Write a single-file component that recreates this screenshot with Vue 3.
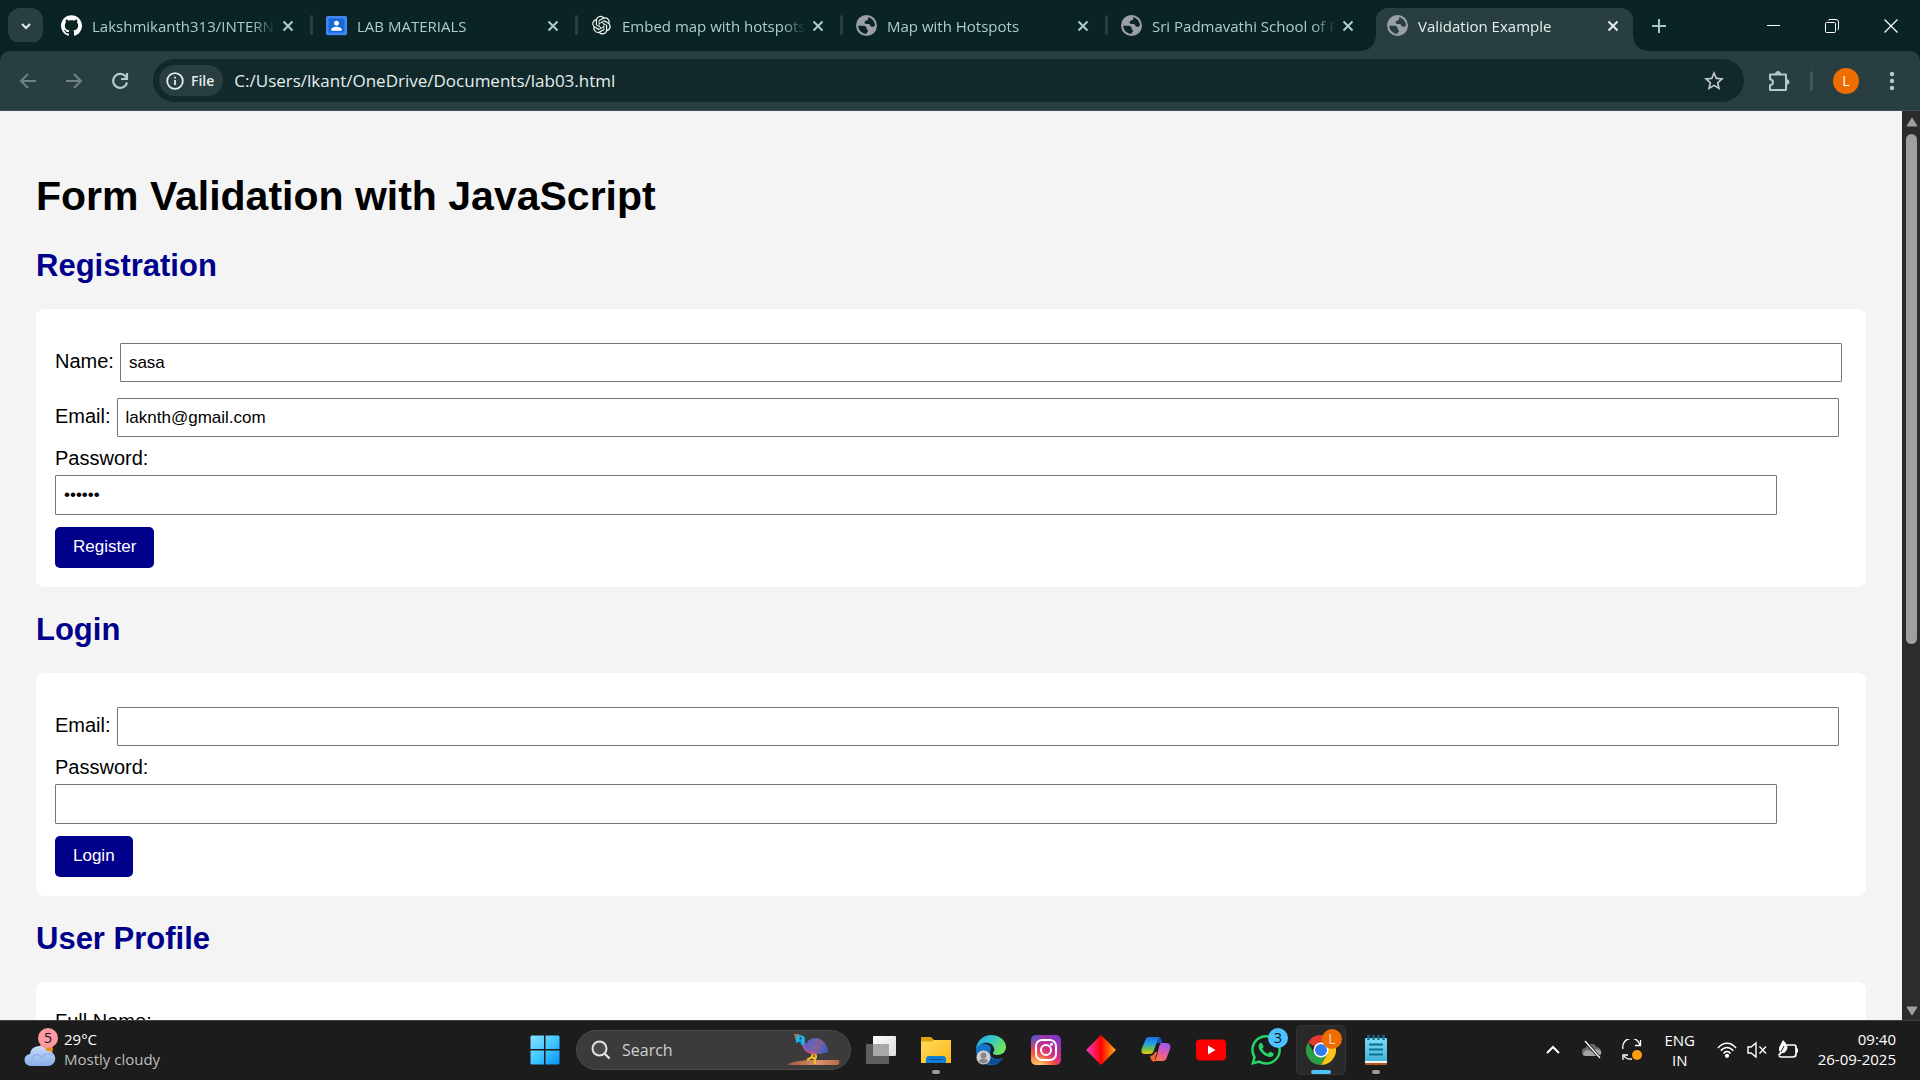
<script setup>
import { ref } from 'vue'

const tabs = [
  { title: 'Lakshmikanth313/INTERN', icon: 'github' },
  { title: 'LAB MATERIALS', icon: 'classroom' },
  { title: 'Embed map with hotspots', icon: 'openai' },
  { title: 'Map with Hotspots', icon: 'globe' },
  { title: 'Sri Padmavathi School of P', icon: 'globe' },
  { title: 'Validation Example', icon: 'globe', active: true },
]

const url = ref('C:/Users/lkant/OneDrive/Documents/lab03.html')
const regName = ref('sasa')
const regEmail = ref('laknth@gmail.com')
const regPassword = ref('secret')
const loginEmail = ref('')
const loginPassword = ref('')
const fullName = ref('')
</script>

<template>
  <div class="screen">
    <header class="tabstrip">
      <button class="tab-search" aria-label="Search tabs">
        <svg width="12" height="12" viewBox="0 0 12 12"><path d="M2 4l4 4 4-4" fill="none" stroke="#dfe9e9" stroke-width="2" /></svg>
      </button>
      <div class="tabs" role="tablist">
        <div v-for="tab in tabs" :key="tab.title" class="tab" :class="{ active: tab.active }" role="tab" :aria-selected="!!tab.active">
          <svg v-if="tab.icon === 'github'" class="favicon" viewBox="0 0 24 24">
            <path fill="#fff" d="M12 .297c-6.63 0-12 5.373-12 12 0 5.303 3.438 9.8 8.205 11.385.6.113.82-.258.82-.577 0-.285-.01-1.04-.015-2.04-3.338.724-4.042-1.61-4.042-1.61C4.422 18.07 3.633 17.7 3.633 17.7c-1.087-.744.084-.729.084-.729 1.205.084 1.838 1.236 1.838 1.236 1.07 1.835 2.809 1.305 3.495.998.108-.776.417-1.305.76-1.605-2.665-.3-5.466-1.332-5.466-5.93 0-1.31.465-2.38 1.235-3.22-.135-.303-.54-1.523.105-3.176 0 0 1.005-.322 3.3 1.23.96-.267 1.98-.399 3-.405 1.02.006 2.04.138 3 .405 2.28-1.552 3.285-1.23 3.285-1.23.645 1.653.24 2.873.12 3.176.765.84 1.23 1.91 1.23 3.22 0 4.61-2.805 5.625-5.475 5.92.42.36.81 1.096.81 2.22 0 1.606-.015 2.896-.015 3.286 0 .315.21.69.825.57C20.565 22.092 24 17.592 24 12.297c0-6.627-5.373-12-12-12" />
          </svg>
          <svg v-else-if="tab.icon === 'classroom'" class="favicon" viewBox="0 0 24 24">
            <rect x="0" y="1" width="24" height="22" rx="2" fill="#4285f4" />
            <rect x="3" y="4" width="18" height="16" fill="#1967d2" />
            <circle cx="12" cy="9.5" r="2.8" fill="#fff" />
            <path d="M6 18v-1.5c0-2 3.500-3.200 6-3.200s6 1.200 6 3.200V18z" fill="#fff" />
          </svg>
          <svg v-else-if="tab.icon === 'openai'" class="favicon" viewBox="-1.500 -1 27 27">
            <path fill="#f1f5f5" d="M22.2819 9.8211a5.9847 5.9847 0 0 0-.5157-4.9108 6.0462 6.0462 0 0 0-6.5098-2.9A6.0651 6.0651 0 0 0 4.9807 4.1818a5.9847 5.9847 0 0 0-3.9977 2.9 6.0462 6.0462 0 0 0 .7427 7.0966 5.98 5.98 0 0 0 .511 4.9107 6.051 6.051 0 0 0 6.5146 2.9001A5.9847 5.9847 0 0 0 13.2599 24a6.0557 6.0557 0 0 0 5.7718-4.2058 5.9894 5.9894 0 0 0 3.9977-2.9001 6.0557 6.0557 0 0 0-.7475-7.0729zm-9.022 12.6081a4.4755 4.4755 0 0 1-2.8764-1.0408l.1419-.0804 4.7783-2.7582a.7948.7948 0 0 0 .3927-.6813v-6.7369l2.02 1.1686a.071.071 0 0 1 .038.052v5.5826a4.504 4.504 0 0 1-4.4945 4.4944zm-9.6607-4.1254a4.4708 4.4708 0 0 1-.5346-3.0137l.142.0852 4.783 2.7582a.7712.7712 0 0 0 .7806 0l5.8428-3.3685v2.3324a.0804.0804 0 0 1-.0332.0615L9.74 19.9502a4.4992 4.4992 0 0 1-6.1408-1.6464zM2.3408 7.8956a4.485 4.485 0 0 1 2.3655-1.9728V11.6a.7664.7664 0 0 0 .3879.6765l5.8144 3.3543-2.0201 1.1685a.0757.0757 0 0 1-.071 0l-4.8303-2.7865A4.504 4.504 0 0 1 2.3408 7.872zm16.5963 3.8558L13.1038 8.364 15.1192 7.2a.0757.0757 0 0 1 .071 0l4.8303 2.7913a4.4944 4.4944 0 0 1-.6765 8.1042v-5.6772a.79.79 0 0 0-.407-.667zm2.0107-3.0231l-.142-.0852-4.7735-2.7818a.7759.7759 0 0 0-.7854 0L9.409 9.2297V6.8974a.0662.0662 0 0 1 .0284-.0615l4.8303-2.7866a4.4992 4.4992 0 0 1 6.6802 4.66zM8.3065 12.863l-2.02-1.1638a.0804.0804 0 0 1-.038-.0567V6.0742a4.4992 4.4992 0 0 1 7.3757-3.4537l-.142.0805L8.704 5.459a.7948.7948 0 0 0-.3927.6813zm1.0976-2.3654l2.602-1.4998 2.6069 1.4998v2.9994l-2.5974 1.4997-2.6067-1.4997Z" />
          </svg>
          <svg v-else class="favicon" viewBox="2 2 20 20">
            <circle cx="12" cy="12" r="10" fill="#9aa0a6" />
            <path class="sea" d="M13 4c1.500 1.500.5 3-1.500 3.500-1.800.5-1.800 2.800.3 3H14c1.800.2 1.500 2.700 3.500 2.700 1.200 0 2-.5 2.500-1.200A8 8 0 0 0 13 4z" />
            <path class="sea" d="M4 12.300h4.500c2.500 0 3.700 1 3.700 2.700 0 1.200 1.300 1 1.300 2.300 0 1-1.500.8-1.500 2.700A8 8 0 0 1 4 12.300z" />
          </svg>
          <span class="tab-title">{{ tab.title }}</span>
          <button class="tab-close" :aria-label="'Close ' + tab.title">
            <svg width="12" height="12" viewBox="0 0 12 12"><path d="M1.500 1.500l9 9m0-9l-9 9" stroke="currentColor" stroke-width="2" /></svg>
          </button>
        </div>
      </div>
      <button class="new-tab" aria-label="New tab">
        <svg width="14" height="14" viewBox="0 0 14 14"><path d="M7 0v14M0 7h14" stroke="#a9c7c7" stroke-width="2" /></svg>
      </button>
      <div class="window-controls">
        <button aria-label="Minimize"><svg width="14" height="14" viewBox="0 0 14 14"><path d="M1 6.500h13" stroke="#fff" /></svg></button>
        <button aria-label="Restore">
          <svg width="14" height="14" viewBox="0 0 14 14" fill="none" stroke="#fff"><rect x=".5" y="3.500" width="10" height="10" rx="1" /><path d="M3 1.500q.5-1 2-1h6q2.500 0 2.500 2.500v6q0 1.500-1 2" /></svg>
        </button>
        <button aria-label="Close"><svg width="14" height="14" viewBox="0 0 14 14"><path d="M.5.5l13 13m0-13l-13 13" stroke="#fff" stroke-width="1.200" /></svg></button>
      </div>
    </header>

    <nav class="toolbar">
      <div class="nav-buttons">
        <button aria-label="Back"><svg width="18" height="18" viewBox="0 0 18 18"><path d="M17 9H2.500M9 2L2 9l7 7" fill="none" stroke="#6f8385" stroke-width="2" /></svg></button>
        <button aria-label="Forward"><svg width="18" height="18" viewBox="0 0 18 18"><path d="M1 9h14.500M9 2l7 7-7 7" fill="none" stroke="#6f8385" stroke-width="2" /></svg></button>
        <button aria-label="Reload"><svg width="18" height="18" viewBox="0 0 18 18"><path d="M15.300 5.500A7 7 0 1 0 16 10.500M16 1v6h-6" fill="none" stroke="#b0cccc" stroke-width="2.200" /></svg></button>
      </div>
      <div class="omnibox">
        <button class="chip">
          <svg width="18" height="18" viewBox="0 0 18 18"><circle cx="9" cy="9" r="7.800" fill="none" stroke="#e3ebeb" stroke-width="1.800" /><path d="M9 8v5M9 4.700v1.900" stroke="#e3ebeb" stroke-width="1.800" /></svg>
          File
        </button>
        <input v-model="url" class="url" type="text" aria-label="Address" />
        <button class="star" aria-label="Bookmark this page">
          <svg width="22" height="22" viewBox="1 1 22 22"><path d="M22 9.240l-7.190-.62L12 2 9.190 8.630 2 9.240l5.460 4.730L5.820 21 12 17.270 18.180 21l-1.630-7.030zM12 15.400l-3.760 2.270 1-4.280-3.320-2.880 4.380-.38L12 6.100l1.710 4.040 4.380.38-3.320 2.880 1 4.280z" fill="#c5cccd" /></svg>
        </button>
      </div>
      <div class="toolbar-end">
        <button aria-label="Extensions">
          <svg width="22" height="22" viewBox="0 0 22 22"><path d="M2 4.500h16v15.500H2v-4.700c4-.7 4-5.300 0-6z" fill="none" stroke="#b0cccc" stroke-width="2" stroke-linejoin="round" /><path d="M7.500 4a2.500 2.500 0 0 1 5 0zM18.500 9.500a2.500 2.500 0 0 1 0 5z" fill="#b0cccc" stroke="#b0cccc" /></svg>
        </button>
        <span class="divider"></span>
        <button class="avatar" aria-label="Profile">L</button>
        <button aria-label="Menu"><svg width="6" height="20" viewBox="0 0 6 20" fill="#b0cccc"><circle cx="3" cy="3" r="2.200" /><circle cx="3" cy="10" r="2.200" /><circle cx="3" cy="17" r="2.200" /></svg></button>
      </div>
    </nav>

    <div class="viewport">
      <main class="page">
        <h1>Form Validation with JavaScript</h1>

        <h2>Registration</h2>
        <form class="card" @submit.prevent>
          <div class="field"><label for="reg-name">Name:</label><input id="reg-name" v-model="regName" type="text" /></div>
          <div class="field"><label for="reg-email">Email:</label><input id="reg-email" v-model="regEmail" type="email" /></div>
          <div class="field stacked"><label for="reg-password">Password:</label><input id="reg-password" v-model="regPassword" type="password" /></div>
          <button type="submit">Register</button>
        </form>

        <h2>Login</h2>
        <form class="card" @submit.prevent>
          <div class="field"><label for="login-email">Email:</label><input id="login-email" v-model="loginEmail" type="email" /></div>
          <div class="field stacked"><label for="login-password">Password:</label><input id="login-password" v-model="loginPassword" type="password" /></div>
          <button type="submit">Login</button>
        </form>

        <h2>User Profile</h2>
        <form class="card" @submit.prevent>
          <div class="field stacked"><label for="full-name">Full Name:</label><input id="full-name" v-model="fullName" type="text" /></div>
        </form>
      </main>
      <div class="scrollbar" aria-hidden="true">
        <svg width="12" height="10" viewBox="0 0 12 10"><path d="M6 1l5 8H1z" fill="#9f9f9f" stroke="#9f9f9f" stroke-linejoin="round" /></svg>
        <div class="track"><div class="thumb"></div></div>
        <svg width="12" height="10" viewBox="0 0 12 10"><path d="M6 9l5-8H1z" fill="#9f9f9f" stroke="#9f9f9f" stroke-linejoin="round" /></svg>
      </div>
    </div>

    <footer class="taskbar">
      <button class="weather">
        <span class="weather-icon">
          <svg width="32" height="38" viewBox="0 0 32 38">
            <defs><linearGradient id="cloud" x2="0" y2="1"><stop stop-color="#c9dcfa" /><stop offset="1" stop-color="#88aeea" /></linearGradient></defs>
            <circle cx="22" cy="19" r="7" fill="#f28a1c" />
            <path d="M7 36a6 6 0 0 1-1-12 9 9 0 0 1 17-3 7.500 7.500 0 0 1 1.500 15z" fill="url(#cloud)" />
            <path d="M8 27c4-4 8-3 10 1 2-5 8-6 11-2" fill="none" stroke="#7fa3e4" stroke-width="1.500" opacity=".6" />
          </svg>
          <span class="count pink">5</span>
        </span>
        <span class="weather-text"><span>29°C</span><span class="dim">Mostly cloudy</span></span>
      </button>

      <div class="apps">
        <button class="start" aria-label="Start">
          <svg width="30" height="30" viewBox="0 0 30 30">
            <defs><linearGradient id="win" x2="1" y2="1"><stop stop-color="#86e0ff" /><stop offset=".5" stop-color="#41c8ff" /><stop offset="1" stop-color="#0892fb" /></linearGradient></defs>
            <path d="M1.500.5H14V14H.5V1.500zM15.500.5h13l1 1V14h-14zM.5 15.500H14v14H1.500l-1-1zM15.500 15.500h14v13l-1 1h-13z" fill="url(#win)" />
          </svg>
        </button>
        <label class="search">
          <svg width="20" height="20" viewBox="0 0 20 20"><circle cx="8.500" cy="8.500" r="7" fill="#ffffff14" stroke="#e2e2e2" stroke-width="2" /><path d="M13.500 13.500l5 5" stroke="#e2e2e2" stroke-width="2.400" /></svg>
          <input type="text" placeholder="Search" aria-label="Search" />
          <svg width="52" height="32" viewBox="0 0 52 32">
            <defs>
              <linearGradient id="bird" x2="1" y2=".3"><stop stop-color="#c84f9a" /><stop offset=".35" stop-color="#5a62c8" /><stop offset=".7" stop-color="#8a6090" /><stop offset="1" stop-color="#4a5cc4" /></linearGradient>
              <linearGradient id="sand" x2="1"><stop stop-color="#a85a3c" /><stop offset=".6" stop-color="#d98f6e" /><stop offset="1" stop-color="#b96a48" /></linearGradient>
            </defs>
            <path d="M0 30c7-3 16-4 26-4h24c2 0 2 5-1 5H4c-2 0-4 0-4-1z" fill="url(#sand)" />
            <path d="M25 18l-1 5-5 3m5-3l3 2v5m0-12l1 5-2 4" fill="none" stroke="#f4bd22" stroke-width="2.200" />
            <path d="M14 9c0 4 3 8 8 10 6 2 13 1 18-1 0-7-5-13-12-14-6 0-8 3-10 6l-1-2z" fill="url(#bird)" />
            <path d="M15 12c2 5 7 8 13 7" fill="none" stroke="#d24b8f" stroke-width="1.500" />
            <path d="M6 0l5 0 1 3-4 4z" fill="#9a7f64" />
            <path d="M8 5c0-5 9-5 9 0 0 3-1 4-1 6-3 1-4-2-3-4l-5 2z" fill="#19b5e8" />
            <circle cx="12.500" cy="4.500" r="1" fill="#123" />
          </svg>
        </label>
        <button aria-label="Task view">
          <svg width="30" height="28" viewBox="0 0 30 28">
            <defs><linearGradient id="tv" x2="1" y2="1"><stop stop-color="#fff" /><stop offset="1" stop-color="#dadada" /></linearGradient></defs>
            <rect x="0" y="8" width="23" height="20" rx="1" fill="#5f5f5f" /><rect x="7" y="0" width="23" height="20" rx="1" fill="url(#tv)" /><path d="M7 8h16v12H7z" fill="#a9a9a9" />
          </svg>
        </button>
        <button class="running" aria-label="File Explorer">
          <svg width="30" height="28" viewBox="0 0 30 28">
            <defs><linearGradient id="folder" x2="1" y2="1"><stop stop-color="#ffd95e" /><stop offset="1" stop-color="#fdb813" /></linearGradient></defs>
            <path d="M0 1h10l3 3v8H0z" fill="#e0a008" /><path d="M0 5.500h11l2-1.500h17v23H0z" fill="url(#folder)" /><path d="M5 27v-4q0-3 3-3h14q3 0 3 3v4z" fill="#0e7dd4" /><path d="M8.500 23.500h13" stroke="#064f94" />
          </svg>
        </button>
        <button aria-label="Microsoft Edge">
          <svg width="30" height="30" viewBox="0 0 30 30">
            <defs><linearGradient id="edge" x2="1" y2=".4"><stop stop-color="#2ca8e8" /><stop offset=".5" stop-color="#2fc6d0" /><stop offset="1" stop-color="#6fe25c" /></linearGradient></defs>
            <path d="M1 11C1 18 6 28 16 30c5 0 9-3 11-7-5 3-12 1-14-4-1-4 1-6 2-7z" fill="#0f5fae" />
            <path d="M0 15C0 9 6 8 10 9c5 1 6 5 4 8-1 5 6 9 13 6-3 4-7 7-12 7C6 30 0 23 0 15z" fill="#1674c8" />
            <path d="M13 19c2 6 9 7 14 4-3 5-9 7-14 6-5-2-5-9 0-10z" fill="#0c4d92" />
            <path d="M0 14C1 5 8 0 15 0c9 0 15 6 15 12 0 5-4 8-9 8-3 0-4-1-4-2s2-2 1-5C16 6 4 6 0 14z" fill="url(#edge)" />
            <circle cx="7.500" cy="22.500" r="7" fill="#d3d1cf" /><circle cx="7.500" cy="20.500" r="3" fill="#8a8886" /><path d="M3 26.500c0-4 9-4 9 0-2 2.500-7 2.500-9 0z" fill="#8a8886" />
          </svg>
        </button>
        <button aria-label="Instagram">
          <svg width="30" height="30" viewBox="0 0 30 30">
            <defs>
              <linearGradient id="ig" x1="0" y1="1" x2=".7" y2="0"><stop stop-color="#fdb84d" /><stop offset=".3" stop-color="#f9593c" /><stop offset=".6" stop-color="#d22d84" /><stop offset="1" stop-color="#8436c4" /></linearGradient>
              <radialGradient id="ig-blue" cx="0" cy="0" r=".5"><stop stop-color="#3f5fd8" /><stop offset="1" stop-color="#3f5fd8" stop-opacity="0" /></radialGradient>
              <radialGradient id="ig-gold" cx=".3" cy="1.100" r=".5"><stop stop-color="#ffe08a" /><stop offset="1" stop-color="#ffb04a" stop-opacity="0" /></radialGradient>
            </defs>
            <rect width="30" height="30" rx="5" fill="url(#ig)" /><rect width="30" height="30" rx="5" fill="url(#ig-blue)" /><rect width="30" height="30" rx="5" fill="url(#ig-gold)" />
            <rect x="5" y="5" width="20" height="20" rx="6" fill="none" stroke="#fff" stroke-width="2" /><circle cx="15" cy="15" r="5" fill="none" stroke="#fff" stroke-width="2" /><circle cx="20.500" cy="9.300" r="1.500" fill="#fff" />
          </svg>
        </button>
        <button aria-label="Diamond">
          <svg width="30" height="30" viewBox="0 0 30 30">
            <defs><linearGradient id="dia"><stop stop-color="#ee35c8" /><stop offset=".35" stop-color="#ff1744" /><stop offset=".5" stop-color="#ff0000" /><stop offset=".65" stop-color="#ff3a00" /><stop offset="1" stop-color="#ffb21e" /></linearGradient></defs>
            <path d="M15 0l15 15-15 15L0 15z" fill="url(#dia)" />
          </svg>
        </button>
        <button aria-label="Copilot">
          <svg width="30" height="28" viewBox="0 0 30 28">
            <defs>
              <linearGradient id="cp1" x2="0" y2="1"><stop stop-color="#1b6fe0" /><stop offset=".4" stop-color="#22a3e4" /><stop offset=".7" stop-color="#6cc04a" /><stop offset="1" stop-color="#f2c80f" /></linearGradient>
              <linearGradient id="cp2" x1=".3" x2="0" y2="1"><stop stop-color="#a35be8" /><stop offset=".5" stop-color="#e55b9b" /><stop offset="1" stop-color="#ff7b3a" /></linearGradient>
            </defs>
            <path d="M17 1c2 0 3 1 3.500 3l1 3h-6z" fill="#1c4fc0" />
            <path d="M8 1h11c-2 1-2.500 3-3 5l-3 8c-1 3-2 4-5 4H4c-4 0-4-3-3-6L4 5c1-3 2-4 4-4z" fill="url(#cp1)" />
            <path d="M13 26c-3-1-3-3-4-6 3 0 4-2 5-4h2z" fill="#f06a30" />
            <path d="M20 7h5c4 0 5 3 4 6l-3 8c-1 3-2 4-5 4h-9c3-1 3-3 4-6l2-8c.5-2 1-3 2-4z" fill="url(#cp2)" />
          </svg>
        </button>
        <button aria-label="YouTube">
          <svg width="30" height="22" viewBox="0 0 30 22"><rect width="30" height="21" y=".5" rx="4" fill="#f00" /><path d="M12 6.500l7.500 4.500-7.500 4.500z" fill="#fff" /></svg>
        </button>
        <button aria-label="WhatsApp">
          <svg width="30" height="30" viewBox="0 0 24 24"><path fill="#25d366" d="M17.472 14.382c-.297-.149-1.758-.867-2.030-.967-.273-.099-.471-.148-.67.15-.197.297-.767.966-.94 1.164-.173.199-.347.223-.644.075-.297-.15-1.255-.463-2.390-1.475-.883-.788-1.480-1.761-1.653-2.059-.173-.297-.018-.458.13-.606.134-.133.298-.347.446-.52.149-.174.198-.298.298-.497.099-.198.05-.371-.025-.52-.075-.149-.669-1.612-.916-2.207-.242-.579-.487-.5-.669-.51-.173-.008-.371-.01-.57-.01-.198 0-.52.074-.792.372-.272.297-1.040 1.016-1.040 2.479 0 1.462 1.065 2.875 1.213 3.074.149.198 2.096 3.200 5.077 4.487.709.306 1.262.489 1.694.625.712.227 1.360.195 1.871.118.571-.085 1.758-.719 2.006-1.413.248-.694.248-1.289.173-1.413-.074-.124-.272-.198-.57-.347m-5.421 7.403h-.004a9.870 9.870 0 01-5.031-1.378l-.361-.214-3.741.982.998-3.648-.235-.374a9.860 9.860 0 01-1.510-5.260c.001-5.450 4.436-9.884 9.888-9.884 2.640 0 5.122 1.030 6.988 2.898a9.825 9.825 0 012.893 6.994c-.003 5.450-4.437 9.884-9.885 9.884m8.413-18.297A11.815 11.815 0 0012.050 0C5.495 0 .16 5.335.157 11.892c0 2.096.547 4.142 1.588 5.945L.057 24l6.305-1.654a11.882 11.882 0 005.683 1.448h.005c6.554 0 11.890-5.335 11.893-11.893a11.821 11.821 0 00-3.480-8.413z" /></svg>
          <span class="count blue">3</span>
        </button>
        <button class="running current" aria-label="Google Chrome">
          <svg width="30" height="30" viewBox="0 0 30 30">
            <path d="M15 15L2 7.500A15 15 0 0 1 28 7.500H15z" fill="#e33b2e" />
            <path d="M15 15l6.500 3.800L15 30A15 15 0 0 1 2 7.500l6.500 11.300z" fill="#2b9f47" />
            <path d="M15 7.500h13A15 15 0 0 1 15 30l6.500-11.200z" fill="#fcc419" />
            <circle cx="15" cy="15" r="7.500" fill="#fff" /><circle cx="15" cy="15" r="6" fill="#2f7bf0" />
          </svg>
          <span class="count orange">L</span>
        </button>
        <button class="running" aria-label="Notepad">
          <svg width="24" height="30" viewBox="0 0 24 30">
            <defs><linearGradient id="note" x2="0" y2="1"><stop stop-color="#7fdcf2" /><stop offset="1" stop-color="#44b4d8" /></linearGradient></defs>
            <rect x="1" y="24" width="22" height="6" rx="1" fill="#b3561b" /><rect x="1" y="22" width="22" height="6" fill="#f3f3f3" /><rect x="1" y="3" width="22" height="23" rx="1" fill="url(#note)" />
            <path d="M4.500 0v5M9.500 0v5M14.500 0v5M19.500 0v5" stroke="#0d6e93" stroke-width="2.400" /><path d="M5 9.500h14M5 14.500h14M5 19.500h14" stroke="#0d6e93" stroke-width="2" />
          </svg>
        </button>
      </div>

      <div class="tray">
        <button aria-label="Show hidden icons"><svg width="20" height="20" viewBox="0 0 20 20"><path d="M4 13l6-6 6 6" fill="none" stroke="#fff" stroke-width="2" /></svg></button>
        <button aria-label="OneDrive">
          <svg width="20" height="20" viewBox="0 0 20 20"><path d="M4 16a4 4 0 0 1-.5-8 6 6 0 0 1 11-1 4.600 4.600 0 0 1 1 9z" fill="#6b6b6b" /><path d="M1 14c2-5 6-5 9-2 2-3 6-4 9-1 1 3-1 5-3 5H4c-2 0-3-1-3-2z" fill="#a4a4a4" /><path d="M3 1l15 17" stroke="#1c1c1c" stroke-width="3" /><path d="M3 1l15 17" stroke="#fff" stroke-width="1.300" /></svg>
        </button>
        <button aria-label="Windows Update">
          <svg width="22" height="22" viewBox="0 0 22 22"><path d="M2 10a8.500 8.500 0 0 1 17-4M19.500 1v5.500H14M2 21v-5h5M3 17c2 3 5 3.500 8 3" fill="none" stroke="#fff" stroke-width="1.300" /><circle cx="16" cy="16" r="5" fill="#ff9d0a" /></svg>
        </button>
        <button class="lang"><span>ENG</span><span>IN</span></button>
        <div class="status">
          <svg width="20" height="18" viewBox="0 0 20 18" fill="none" stroke="#fff" stroke-width="1.500"><path d="M1 7c5-6.500 13-6.500 18 0M3.800 9.800c3.500-4.500 8.900-4.500 12.400 0M6.500 12.500c2-2.600 5-2.600 7 0" /><circle cx="10" cy="14.800" r="1.400" fill="#fff" /></svg>
          <svg width="20" height="18" viewBox="0 0 20 18" fill="none" stroke="#fff" stroke-width="1.400"><path d="M1 6v6h3l5 4V2L4 6zM12.500 5.500l6.500 7m0-7l-6.500 7" /></svg>
          <svg width="22" height="20" viewBox="0 0 22 20"><path d="M10 5h7q2 0 2 2v7q0 3-3 3H5q-2 0-3-1" fill="none" stroke="#fff" stroke-width="1.700" /><path d="M19 8.500h2v4h-2z" fill="#fff" /><path d="M6 0c4 4 6 7 3 11-1 2-3 2-4 2l-3 3-1-1 2-3C0 8 4 5 6 0z" fill="#fff" /><path d="M4 12l3-6" stroke="#1c1c1c" /></svg>
        </div>
        <button class="clock"><span>09:40</span><span>26-09-2025</span></button>
      </div>
    </footer>
  </div>
</template>

<style>
body {
  background: #1c1c1c;
}
</style>

<style scoped>
* {
  box-sizing: border-box;
}
.screen {
  display: flex;
  flex-direction: column;
  height: 100vh;
  overflow: hidden;
  font-family: 'Open Sans', 'Noto Sans', sans-serif;
  font-size: 15px;
}
button {
  display: flex;
  align-items: center;
  justify-content: center;
  padding: 0;
  border: 0;
  background: none;
  color: inherit;
  font: inherit;
}
svg {
  display: block;
  flex: none;
}
input {
  min-width: 0;
  outline: 0;
}

/* Tab strip */
.tabstrip {
  display: flex;
  flex: none;
  height: 51px;
  padding-left: 8px;
  background: #0a2325;
  color: #b0cccc;
}
.tab-search {
  width: 35px;
  height: 35px;
  margin: 8px 5px 0 0;
  border-radius: 12px;
  background: #283e40;
}
.tabs {
  display: flex;
  flex: 0 1 1590px;
  min-width: 0;
}
.tab {
  position: relative;
  display: flex;
  flex: 0 1 265px;
  align-items: center;
  min-width: 0;
  padding: 0 19px 0 13px;
}
.tab:not(.active)::after {
  content: '';
  position: absolute;
  top: 15px;
  right: 0;
  width: 3px;
  height: 20px;
  border-radius: 2px;
  background: #283e40;
}
.tab:nth-last-child(2)::after {
  display: none;
}
.tab.active {
  flex-basis: 257px;
  margin: 8px 5px 0 3px;
  padding: 0 14px 8px 11px;
  border-radius: 12px 12px 0 0;
  background: #283e40;
  color: #e6eeee;
}
.tab.active::before,
.tab.active::after {
  content: '';
  position: absolute;
  top: auto;
  bottom: 0;
  width: 14px;
  height: 14px;
}
.tab.active::before {
  right: 100%;
  background: radial-gradient(circle at 0 0, transparent 13px, #283e40 14px);
}
.tab.active::after {
  left: 100%;
  background: radial-gradient(circle at 100% 0, transparent 13px, #283e40 14px);
}
.favicon {
  width: 21px;
  height: 21px;
  margin-right: 10px;
}
.sea {
  fill: #0a2325;
}
.active .sea {
  fill: #283e40;
}
.tab-title {
  flex: 1;
  padding-top: 1px;
  overflow: hidden;
  white-space: nowrap;
  mask-image: linear-gradient(to left, transparent, #000 24px);
}
.tab-close {
  width: 12px;
  height: 20px;
  margin-left: 6px;
}
.new-tab {
  width: 36px;
  height: 36px;
  margin: 8px 0 0 3px;
}
.window-controls {
  display: flex;
  height: 51px;
  margin-left: auto;
}
.window-controls button {
  width: 59px;
}

/* Toolbar */
.toolbar {
  display: flex;
  flex: none;
  align-items: center;
  height: 60px;
  border-bottom: 1px solid #3d5153;
  border-radius: 10px 10px 0 0;
  background: #283e40;
  box-shadow: 0 -10px 0 -1px #0a2325;
}
.nav-buttons {
  display: flex;
  gap: 28px;
  margin: 0 24px 0 19px;
}
.omnibox {
  display: flex;
  flex: 1;
  align-items: center;
  height: 43px;
  padding: 0 19px 0 6px;
  border-radius: 22px;
  background: #11292b;
}
.chip {
  gap: 7px;
  height: 31px;
  padding: 0 9px 0 7px;
  border-radius: 16px;
  background: #283e40;
  color: #e3ebeb;
  font-size: 14px;
  font-weight: 600;
}
.url {
  flex: 1;
  height: 40px;
  padding: 0 11px;
  border: 0;
  background: none;
  color: #e6eeee;
  font: inherit;
  font-size: 17px;
}
.toolbar-end {
  display: flex;
  align-items: center;
  padding: 0 25px 0 24px;
}
.divider {
  width: 3px;
  height: 20px;
  margin: 0 20px;
  border-radius: 2px;
  background: #3f565a;
}
.avatar {
  width: 26px;
  height: 26px;
  margin-right: 30px;
  border-radius: 50%;
  background: #ef6c00;
  color: #fff;
  font-size: 14px;
}

/* Web page */
.viewport {
  display: flex;
  flex: 1;
  min-height: 0;
  background: #f4f4f4;
}
.page {
  flex: 1;
  min-width: 0;
  overflow: hidden;
  padding: 62px 36px 0;
  color: #000;
  font-family: 'Liberation Sans', Arial, sans-serif;
  font-size: 20px;
}
h1 {
  margin: 0 0 30px;
  font-size: 41px;
  line-height: 46px;
}
h2 {
  margin: 26px 0;
  color: #00008b;
  font-size: 31px;
  line-height: 34px;
}
.card {
  padding: 28px 19px 19px;
  border-radius: 8px;
  background: #fff;
}
.field {
  display: flex;
  align-items: baseline;
  gap: 6px;
  padding: 6px 0 10px;
}
.field label {
  line-height: 22px;
}
.field input {
  flex: none;
  width: calc(95% + 20px);
  height: 39px;
  padding: 0 8px;
  border: 1px solid #767676;
  border-radius: 1px;
  background: #fff;
  color: #000;
  font: inherit;
  font-size: 17px;
}
.field.stacked {
  flex-direction: column;
  padding: 0 0 12px;
}
.field.stacked input {
  height: 40px;
}
.card button {
  height: 41px;
  padding: 0 18px 2px;
  border-radius: 5px;
  background: #00008b;
  color: #fff;
  font-size: 17px;
}
.scrollbar {
  display: flex;
  flex: none;
  flex-direction: column;
  align-items: center;
  gap: 7px;
  width: 18px;
  padding: 6px 0 4px 1px;
  background: #2c2c2c;
}
.track {
  flex: 1;
}
.thumb {
  width: 11px;
  height: 59%;
  border-radius: 6px;
  background: #9f9f9f;
}

/* Taskbar */
.taskbar {
  display: grid;
  grid-template-columns: 1fr auto 1fr;
  align-items: center;
  flex: none;
  height: 60px;
  padding-bottom: 1px;
  border-top: 1px solid #404040;
  background: #1c1c1c;
  color: #fff;
}
.weather {
  justify-self: start;
  gap: 8px;
  padding: 0 0 2px 24px;
  text-align: left;
}
.weather-icon {
  position: relative;
  width: 32px;
}
.weather-text,
.lang,
.clock {
  display: flex;
  flex-direction: column;
  line-height: 20px;
}
.clock {
  padding-bottom: 2px;
}
.dim {
  color: #bdbdbd;
}
.count {
  position: absolute;
  top: -2px;
  right: -2px;
  width: 20px;
  height: 20px;
  border-radius: 50%;
  color: #111;
  font-size: 14px;
  line-height: 20px;
  text-align: center;
}
.pink {
  background: #ff99a4;
}
.blue {
  top: 3px;
  right: 3px;
  background: #4cc2ff;
}
.orange {
  top: 3px;
  right: 3px;
  background: #ef6c00;
  color: #f4d9c4;
}
.apps {
  display: flex;
  align-items: center;
  gap: 5px;
}
.apps button {
  position: relative;
  width: 50px;
  height: 50px;
  border-radius: 5px;
}
.apps .start {
  width: 52px;
}
.apps .current {
  border: 1px solid #343434;
  background: #292929;
}
.running::after {
  content: '';
  position: absolute;
  bottom: 1px;
  left: 50%;
  width: 8px;
  height: 4px;
  margin-left: -4px;
  border-radius: 2px;
  background: #9a9a9a;
}
.current::after {
  bottom: 0;
  width: 20px;
  margin-left: -10px;
  background: #4cc2ff;
}
.search {
  display: flex;
  align-items: center;
  width: 275px;
  height: 40px;
  padding: 0 10px 0 14px;
  border: 1px solid #4a4a4a;
  border-radius: 20px;
  background: #3b3b3b;
}
.search input {
  flex: 1;
  padding: 0 0 0 11px;
  border: 0;
  background: none;
  color: #fff;
  font: inherit;
  font-size: 16px;
}
.search input::placeholder {
  color: #cfcfcf;
}
.tray {
  display: flex;
  align-items: center;
  justify-self: end;
  gap: 19px;
  padding-right: 24px;
}
.lang {
  width: 36px;
}
.status {
  display: flex;
  align-items: center;
  gap: 10px;
}
.clock {
  align-items: flex-end;
  min-width: 78px;
}
</style>
